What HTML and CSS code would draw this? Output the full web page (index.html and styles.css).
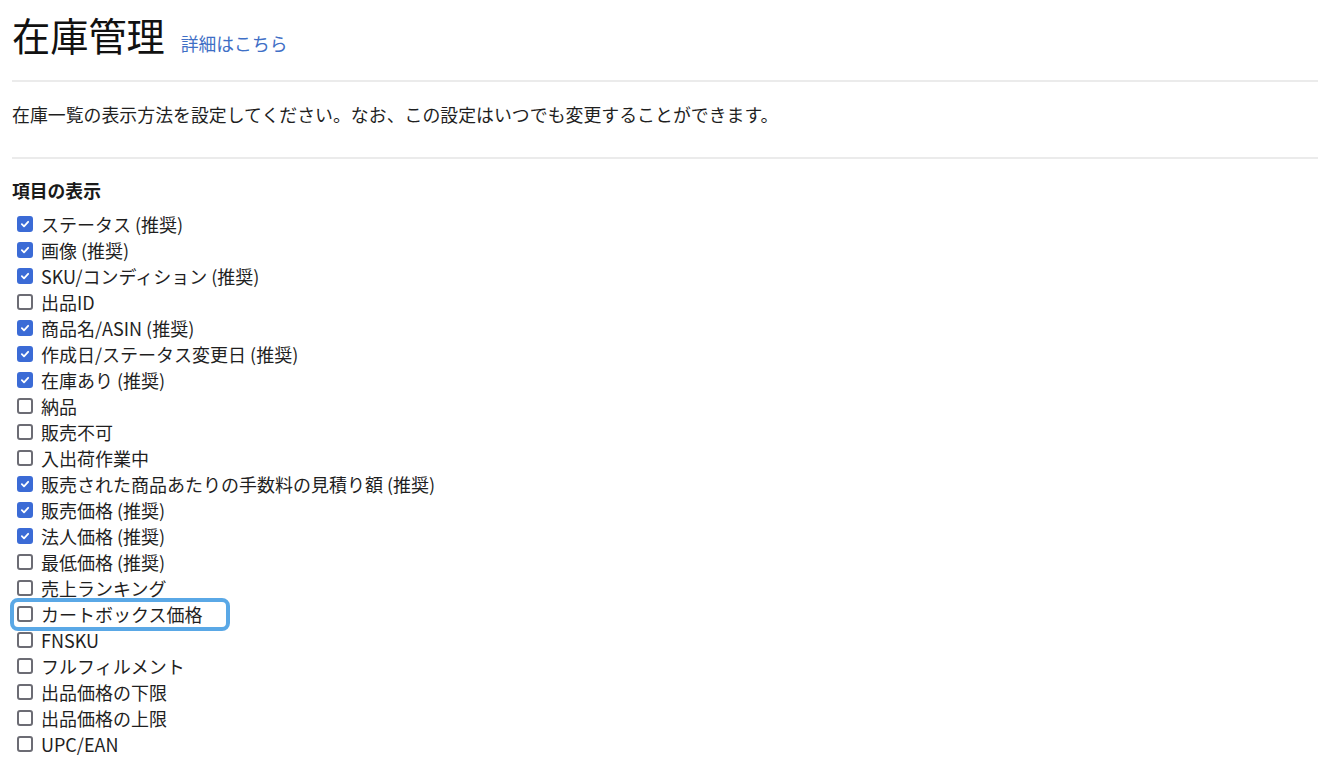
FILE: index.html
```html
<!DOCTYPE html>
<html lang="ja">
<head>
    <meta charset="UTF-8">
    <title>在庫管理</title>
    <link rel="stylesheet" href="styles.css">
</head>
<body>
    <div class="page">
        <div class="title-row">
            <h1 class="title">在庫管理</h1>
            <a class="help" href="#">詳細はこちら</a>
        </div>
        <hr class="rule">
        <p class="intro">在庫一覧の表示方法を設定してください。なお、この設定はいつでも変更することができます。</p>
        <hr class="rule">

        <h2 class="section">項目の表示</h2>
        <div class="options">
            <label class="opt"><span class="box on"><svg viewBox="0 0 16 16"><path d="M3.8 8.3l2.9 2.8 5.5-6"/></svg></span>ステータス (推奨)</label>
            <label class="opt"><span class="box on"><svg viewBox="0 0 16 16"><path d="M3.8 8.3l2.9 2.8 5.5-6"/></svg></span>画像 (推奨)</label>
            <label class="opt"><span class="box on"><svg viewBox="0 0 16 16"><path d="M3.8 8.3l2.9 2.8 5.5-6"/></svg></span>SKU/コンディション (推奨)</label>
            <label class="opt"><span class="box"></span>出品ID</label>
            <label class="opt"><span class="box on"><svg viewBox="0 0 16 16"><path d="M3.8 8.3l2.9 2.8 5.5-6"/></svg></span>商品名/ASIN (推奨)</label>
            <label class="opt"><span class="box on"><svg viewBox="0 0 16 16"><path d="M3.8 8.3l2.9 2.8 5.5-6"/></svg></span>作成日/ステータス変更日 (推奨)</label>
            <label class="opt"><span class="box on"><svg viewBox="0 0 16 16"><path d="M3.8 8.3l2.9 2.8 5.5-6"/></svg></span>在庫あり (推奨)</label>
            <label class="opt"><span class="box"></span>納品</label>
            <label class="opt"><span class="box"></span>販売不可</label>
            <label class="opt"><span class="box"></span>入出荷作業中</label>
            <label class="opt"><span class="box on"><svg viewBox="0 0 16 16"><path d="M3.8 8.3l2.9 2.8 5.5-6"/></svg></span>販売された商品あたりの手数料の見積り額 (推奨)</label>
            <label class="opt"><span class="box on"><svg viewBox="0 0 16 16"><path d="M3.8 8.3l2.9 2.8 5.5-6"/></svg></span>販売価格 (推奨)</label>
            <label class="opt"><span class="box on"><svg viewBox="0 0 16 16"><path d="M3.8 8.3l2.9 2.8 5.5-6"/></svg></span>法人価格 (推奨)</label>
            <label class="opt"><span class="box"></span>最低価格 (推奨)</label>
            <label class="opt"><span class="box"></span>売上ランキング</label>
            <label class="opt marked"><span class="box"></span>カートボックス価格</label>
            <label class="opt"><span class="box"></span>FNSKU</label>
            <label class="opt"><span class="box"></span>フルフィルメント</label>
            <label class="opt"><span class="box"></span>出品価格の下限</label>
            <label class="opt"><span class="box"></span>出品価格の上限</label>
            <label class="opt"><span class="box"></span>UPC/EAN</label>
        </div>
    </div>
</body>
</html>
```

FILE: styles.css
```css
body {
    margin: 0;
    padding: 0;
    background: #fff;
    color: #1a1a1a;
    font-family: "Noto Sans CJK JP", "Noto Sans", sans-serif;
    font-size: 18px;
}

.page {
    padding: 12px 0 20px 12px;
}

.title-row {
    display: flex;
    align-items: baseline;
    gap: 16px;
    height: 46px;
}

.title {
    margin: 0;
    font-size: 38.2px;
    font-weight: 400;
    line-height: 46px;
    color: #111;
}

.help {
    color: #3f6fc6;
    text-decoration: none;
    font-size: 17.8px;
}

.rule {
    margin: 0;
    border: 0;
    border-top: 2px solid #ebebeb;
}

.title-row + .rule {
    margin-top: 22px;
}

.intro {
    margin: 0;
    padding: 20px 0 31px;
    font-size: 17.9px;
    line-height: 24px;
    color: #1f1f1f;
}

.section {
    margin: 19px 0 9px;
    font-size: 17.8px;
    font-weight: 700;
    line-height: 24px;
    color: #1a1a1a;
}

.options {
    display: flex;
    flex-direction: column;
    align-items: flex-start;
}

.opt {
    display: inline-flex;
    align-items: center;
    gap: 8px;
    height: 26px;
    padding-left: 5px;
    font-size: 18px;
    color: #1f1f1f;
    position: relative;
}

.box {
    width: 12px;
    height: 12px;
    border: 2px solid #6c6c74;
    border-radius: 3px;
    display: inline-flex;
    flex: none;
}

.box.on {
    background: #3b6bd6;
    border-color: #3b6bd6;
}

.box svg {
    width: 12px;
    height: 12px;
    fill: none;
    stroke: #fff;
    stroke-width: 2.4;
    stroke-linecap: round;
    stroke-linejoin: round;
}

.marked::after {
    content: "";
    position: absolute;
    left: -2px;
    right: -28px;
    top: -3px;
    bottom: -4px;
    border: 4px solid #5aa8e6;
    border-radius: 8px;
}
```
